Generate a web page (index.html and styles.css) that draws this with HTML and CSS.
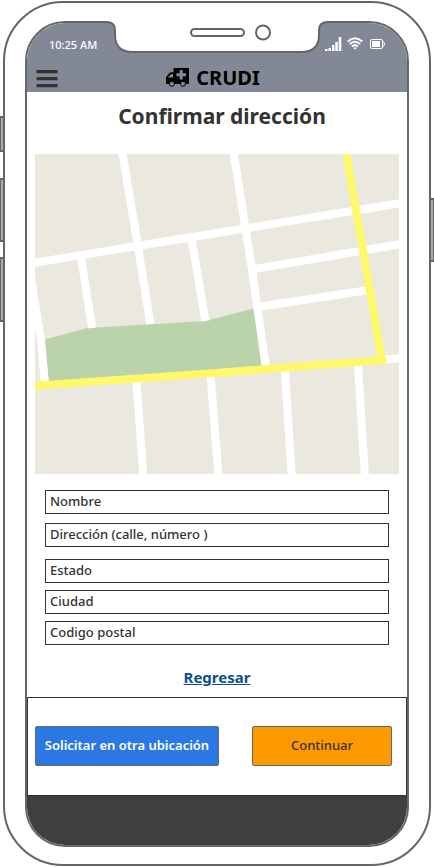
FILE: index.html
```html
<!DOCTYPE html>
<html lang="es">
<head>
<meta charset="utf-8">
<meta name="viewport" content="width=device-width, initial-scale=1">
<title>CRUDI</title>
<link rel="stylesheet" href="styles.css">
</head>
<body>
<div class="phone">
  <span class="key key-mute"></span>
  <span class="key key-up"></span>
  <span class="key key-down"></span>
  <span class="key key-power"></span>
  <svg class="notch" width="222" height="34" viewBox="0 0 222 34" aria-hidden="true">
    <path class="notch-fill" d="M0 0V2C6 2 9 5 9 10V15C9 26 15 32 27 32H195C207 32 213 26 213 15V10C213 5 216 2 222 2V0Z"/>
    <path class="outline" d="M0 2C6 2 9 5 9 10V15C9 26 15 32 27 32H195C207 32 213 26 213 15V10C213 5 216 2 222 2"/>
    <rect class="outline" x="85" y="9" width="53" height="7" rx="3.5"/>
    <circle class="outline" cx="157" cy="12.5" r="7"/>
  </svg>
  <div class="screen">
    <header class="top">
      <div class="status">
        <span class="time">10:25 AM</span>
        <svg class="signals" width="60" height="16" viewBox="0 0 60 16" aria-hidden="true">
          <path class="white" d="M0 13h2.500v2H0zM3.500 12h2.500v3h-2.500zM7 9h2.500v6H7zM10.300 6h2.500v9h-2.500zM13.700 1h2.600v14h-2.600z"/>
          <g class="waves">
            <path d="M22.700 5.500Q30 -1 37.300 5.500"/>
            <path d="M24.800 8Q30 3.400 35.200 8"/>
            <path d="M27 10.400Q30 7.800 33 10.400"/>
          </g>
          <path class="white" d="M28.300 11.900Q30 10.600 31.700 11.900L30 13.500z"/>
          <rect class="cell" x="45.500" y="3.500" width="12" height="9" rx="1.500"/>
          <path class="cell" d="M57.500 5.500q2 .5 2 2.500t-2 2.500"/>
          <path class="white" d="M47 5h8v6h-8z"/>
        </svg>
      </div>
      <div class="bar">
        <button class="menu" type="button" aria-label="Menú">
          <svg width="22" height="18" viewBox="0 0 22 18" aria-hidden="true"><path d="M1 0h20q.5 0 .5 .5v2.300q0 .5-.5 .5H1q-.5 0-.5-.5V.5Q.5 0 1 0zM1 7h20q.5 0 .5 .5v2.300q0 .5-.5 .5H1q-.5 0-.5-.5V7.500Q.5 7 1 7zM1 14h20q.5 0 .5 .5v2.300q0 .5-.5 .5H1q-.5 0-.5-.5v-2.300q0-.5 .5-.5z"/></svg>
        </button>
        <div class="brand">
          <svg width="23" height="19" viewBox="0 0 23 19" aria-hidden="true">
            <path fill-rule="evenodd" d="M7.500 .5Q7.500 0 8 0H22.500Q23 0 23 .5V15.500Q23 16 22 16H1Q0 16 0 14.500V9.700Q0 9 .5 8.500L3.500 5Q4.200 4.300 5 4.300H7.500ZM2 9.500H7V6H5.200L2 9.300ZM13.700 2V5.300H10.400V8.300H13.700V11.600H16.700V8.300H20V5.300H16.700V2Z"/>
            <circle class="wheel" cx="5.900" cy="15.800" r="2.500"/>
            <circle class="wheel" cx="17" cy="15.800" r="2.500"/>
          </svg>
          <span>CRUDI</span>
        </div>
      </div>
    </header>
    <main>
      <h1>Confirmar dirección</h1>
      <svg class="map" viewBox="0 0 363 320" preserveAspectRatio="none" role="img" aria-label="Mapa de la ubicación">
        <rect class="land" width="363" height="320"/>
        <path class="park" d="M8 186L52 174L170 167L220 154L232 212L14 229Z"/>
        <g class="street">
          <path d="M-2 109L365 49"/>
          <path d="M87 -2L102 88L115 170"/>
          <path d="M198 -2L216 113L230 212"/>
          <path d="M46 104L57 174"/>
          <path d="M156 84L170 167"/>
          <path d="M219 115L365 90"/>
          <path d="M222 153L333 136"/>
          <path d="M101 224L108 322"/>
          <path d="M175 220L183 322"/>
          <path d="M249 214L256 322"/>
          <path d="M322 209L329 322"/>
          <path d="M345 206L365 204"/>
          <path d="M-4 125L6 186L10 230"/>
        </g>
        <path class="avenue" d="M-2 232L180 219L346 206L310 -2"/>
      </svg>
      <form id="address" class="fields">
        <input class="name" type="text" placeholder="Nombre" aria-label="Nombre">
        <input class="street-line" type="text" placeholder="Dirección (calle, número )" aria-label="Dirección (calle, número )">
        <div class="place">
          <input type="text" placeholder="Estado" aria-label="Estado">
          <input type="text" placeholder="Ciudad" aria-label="Ciudad">
          <input type="text" placeholder="Codigo postal" aria-label="Codigo postal">
        </div>
      </form>
      <a class="back" href="#">Regresar</a>
    </main>
    <div class="actions">
      <button class="other" type="button">Solicitar en otra ubicación</button>
      <button class="next" type="submit" form="address">Continuar</button>
    </div>
    <div class="base"></div>
  </div>
</div>
</body>
</html>
```
FILE: styles.css
```css
* { box-sizing: border-box; }

body {
  margin: 0;
  padding: 1px 3px;
  min-height: 100vh;
  display: flex;
  background: #fff;
  color: #333;
  font-family: "Noto Sans", "Open Sans", sans-serif;
  font-size: 13px;
}

.phone {
  position: relative;
  flex: 1;
  display: flex;
  padding: 18px 20px 17px;
  border: 2px solid #666;
  border-radius: 60px;
}

.key {
  position: absolute;
  left: -6px;
  width: 6px;
  border: 2px solid #666;
  background: #aaa;
}
.key-mute { top: 113px; height: 36px; }
.key-up { top: 175px; height: 64px; }
.key-down { top: 254px; height: 65px; }
.key-power { top: 195px; left: auto; right: -6px; height: 64px; }

.notch {
  position: absolute;
  top: 17px;
  left: 50%;
  margin-left: -111px;
  z-index: 1;
}
.notch-fill { fill: #fff; }
.outline { fill: none; stroke: #666; stroke-width: 2; }

.screen {
  flex: 1;
  min-width: 0;
  display: flex;
  flex-direction: column;
  border: 2px solid #666;
  border-radius: 40px;
  overflow: hidden;
}

.top { background: #838896; }

.status {
  display: flex;
  justify-content: space-between;
  align-items: center;
  height: 42px;
  padding: 0 22px;
  color: #fff;
  font-size: 11px;
  font-weight: 500;
}
.white { fill: #fff; }
.waves { fill: none; stroke: #fff; stroke-width: 2; }
.cell { fill: none; stroke: #fff; stroke-width: 1; }

.bar {
  display: grid;
  grid-template-columns: 32px 1fr 32px;
  align-items: center;
  height: 27px;
}
.menu {
  display: flex;
  padding: 0 0 0 9px;
  border: 0;
  background: none;
}
.menu path { fill: #333; }
.brand {
  display: flex;
  justify-content: center;
  align-items: center;
  gap: 7px;
  padding: 0 8px 2px 0;
  color: #000;
  font-size: 20px;
  line-height: 25px;
  font-weight: 700;
}
.wheel { stroke: #000; stroke-width: 1; fill: #838896; }

main {
  display: flex;
  flex-direction: column;
  padding: 0 8px;
}

h1 {
  margin: 0;
  padding: 9px 0 23px 10px;
  font-size: 21px;
  line-height: 30px;
  font-weight: 700;
  text-align: center;
}

.map {
  display: block;
  width: 100%;
  height: 320px;
}
.land { fill: #ebe8e0; }
.park { fill: #bad3aa; }
.street { fill: none; stroke: #fff; stroke-width: 8; }
.avenue { fill: none; stroke: #fff86b; stroke-width: 8; }

.fields {
  display: flex;
  flex-direction: column;
  padding: 16px 10px 0;
}
.place {
  display: flex;
  flex-direction: column;
  gap: 7px;
}
input {
  width: 100%;
  height: 24px;
  padding: 0 4px 2px;
  border: 1px solid #333;
  background: #fff;
  color: #333;
  font: inherit;
  font-weight: 500;
}
input::placeholder { color: #333; opacity: 1; }
.name { margin-bottom: 9px; }
.street-line { margin-bottom: 12px; }

.back {
  align-self: center;
  margin: 22px 0 10px;
  color: #0b4f8f;
  font-size: 15px;
  line-height: 20px;
  font-weight: 700;
}

.actions {
  display: flex;
  justify-content: space-between;
  padding: 28px 14px 29px 7px;
  border: 1px solid #333;
}
.actions button {
  height: 40px;
  padding: 0 0 2px;
  border: 1px solid #666;
  border-radius: 2px;
  font: inherit;
}
.actions .other {
  flex: 0 1 184px;
  background: #2b78e4;
  color: #fff;
  font-weight: 600;
}
.actions .next {
  flex: 0 1 140px;
  background: #f90;
  color: #333;
  font-weight: 500;
}

.base {
  flex: 1;
  min-height: 48px;
  background: #3f3f3f;
}
```
